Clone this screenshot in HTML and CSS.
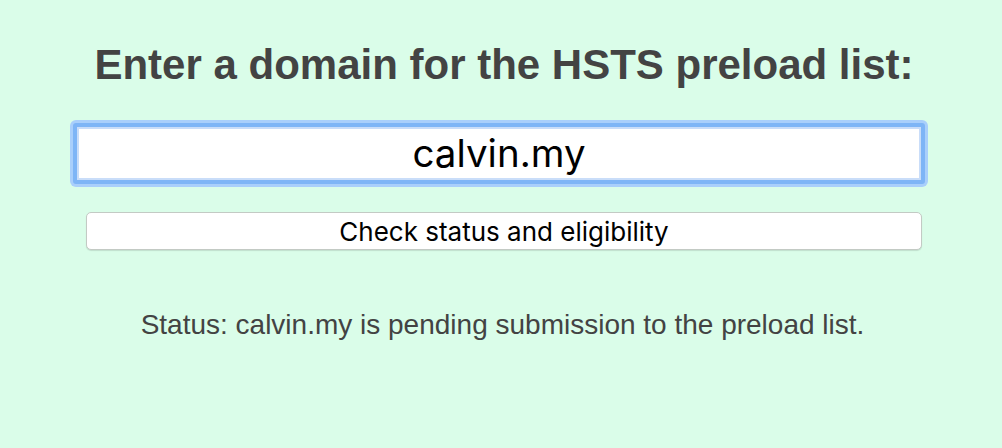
FILE: index.html
```html
<!DOCTYPE html>
<html lang="en">
<head>
  <meta charset="UTF-8" />
  <title>HSTS Preload List Submission</title>
  <link rel="stylesheet" href="styles.css">
</head>
<body>

<div class="form-box">
  <h1>Enter a domain for the HSTS preload list:</h1>

  <form id="domain-form">
    <input type="text" id="domain" class="domain-input" value="calvin.my" />
    <button type="submit" class="check-btn">Check status and eligibility</button>
  </form>

  <p class="status" id="status">Status: calvin.my is pending submission to the preload list.</p>
</div>

</body>
</html>
```

FILE: styles.css
```css
body {
  font-family: "Liberation Sans", Arial, sans-serif;
  background: #dafde9;
  margin: 0;
  padding: 0;
}

.form-box {
  width: 860px;
  margin: 0 auto;
  padding-top: 40px;
  text-align: center;
}

h1 {
  font-size: 42px;
  color: #434343;
  margin: 0 0 33px 6px;
  line-height: 50px;
}

#domain-form {
  display: flex;
  flex-direction: column;
  align-items: center;
}

.domain-input {
  box-sizing: border-box;
  width: 852px;
  height: 61px;
  margin-left: -4px;
  padding: 0 0 1px;
  font-family: Inter, "Liberation Sans", sans-serif;
  font-size: 38.5px;
  text-align: center;
  color: #000;
  background: #fff;
  border: 4px solid #7eb5f6;
  border-radius: 3px;
  box-shadow: inset 0 0 0 2px #c9ddf9, 0 0 0 3px #a9cffb;
  outline: none;
}

.check-btn {
  box-sizing: border-box;
  width: 836px;
  height: 38px;
  margin: 28px 0 0 6px;
  padding: 0;
  font-family: Inter, "Liberation Sans", sans-serif;
  font-size: 26px;
  color: #000;
  background: #fff;
  border: 1px solid #c3cac4;
  border-radius: 5px;
  box-shadow: 0 1px 1px rgba(0, 0, 0, 0.12);
}

.status {
  font-size: 28px;
  line-height: 32px;
  color: #434343;
  margin: 59px 0 0 3px;
}
```
